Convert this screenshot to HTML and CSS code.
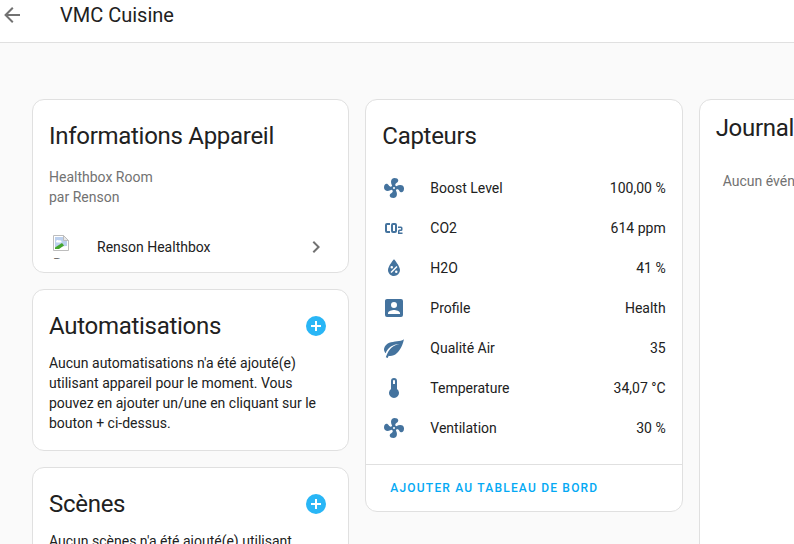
FILE: index.html
```html
<!DOCTYPE html>
<html lang="fr">
<head>
    <meta charset="UTF-8">
    <meta name="viewport" content="width=device-width, initial-scale=1.0">
    <title>VMC Cuisine</title>
    <link rel="stylesheet" href="styles.css">
</head>
<body>
    <header class="toolbar">
        <svg class="back-icon" viewBox="0 0 24 24"><path d="M20,11V13H8L13.5,18.5L12.08,19.92L4.16,12L12.08,4.08L13.5,5.5L8,11H20Z"/></svg>
        <div class="toolbar-title">VMC Cuisine</div>
    </header>

    <main class="columns">
        <div class="column">
            <section class="card">
                <h2 class="card-title">Informations Appareil</h2>
                <div class="device-info">
                    <div>Healthbox Room</div>
                    <div>par Renson</div>
                </div>
                <div class="integration">
                    <div class="broken-img">
                        <svg viewBox="0 0 16 16">
                            <path fill="#fff" stroke="#bdbdbd" d="M.5.5H10.5L15.5 5.5V15.5H.5Z"/>
                            <path fill="#bcd0ee" d="M2 2H10L14 6V11L2 12Z"/>
                            <path fill="#fff" d="M3 6.5C3 5 5 4.5 6 5.5C7.5 5 9 6 8.5 7.5H3.5Z"/>
                            <path fill="#43a52e" d="M2 14V12.5L9 8L11 10.5L6 14Z"/>
                            <path fill="#fff" d="M10 14L13 11L14 12V14Z"/>
                            <path fill="#e8e8e8" stroke="#bdbdbd" d="M10.5 .5V5.5H15.5Z"/>
                        </svg>
                        <span class="broken-alt">Renson</span>
                    </div>
                    <span class="integration-name">Renson Healthbox</span>
                    <svg class="chevron" viewBox="0 0 24 24"><path d="M8.59,16.58L13.17,12L8.59,7.41L10,6L16,12L10,18L8.59,16.58Z"/></svg>
                </div>
            </section>

            <section class="card">
                <div class="title-row">
                    <h2 class="card-title">Automatisations</h2>
                    <svg class="add-icon" viewBox="0 0 24 24"><path d="M17,13H13V17H11V13H7V11H11V7H13V11H17M12,2A10,10 0 0,0 2,12A10,10 0 0,0 12,22A10,10 0 0,0 22,12A10,10 0 0,0 12,2Z"/></svg>
                </div>
                <p class="card-text">Aucun automatisations n'a été ajouté(e) utilisant appareil pour le moment. Vous pouvez en ajouter un/une en cliquant sur le bouton + ci-dessus.</p>
            </section>

            <section class="card">
                <div class="title-row">
                    <h2 class="card-title">Scènes</h2>
                    <svg class="add-icon" viewBox="0 0 24 24"><path d="M17,13H13V17H11V13H7V11H11V7H13V11H17M12,2A10,10 0 0,0 2,12A10,10 0 0,0 12,22A10,10 0 0,0 22,12A10,10 0 0,0 12,2Z"/></svg>
                </div>
                <p class="card-text">Aucun scènes n'a été ajouté(e) utilisant appareil pour le moment. Vous pouvez en ajouter un/une en cliquant sur le bouton + ci-dessus.</p>
            </section>
        </div>

        <div class="column">
            <section class="card">
                <h2 class="card-title">Capteurs</h2>
                <div class="sensors">
                    <div class="sensor">
                        <svg class="sensor-icon" viewBox="0 0 24 24"><path d="M12,11A1,1 0 0,0 11,12A1,1 0 0,0 12,13A1,1 0 0,0 13,12A1,1 0 0,0 12,11M12.5,2C17,2 17.11,5.57 14.75,6.75C13.76,7.24 13.32,8.29 13.13,9.22C13.61,9.42 14.03,9.73 14.35,10.13C18.05,8.13 22.03,8.92 22.03,12.5C22.03,17 18.46,17.1 17.28,14.73C16.78,13.74 15.72,13.3 14.79,13.11C14.59,13.59 14.28,14 13.88,14.34C15.87,18.03 15.08,22 11.5,22C7,22 6.91,18.42 9.27,17.24C10.25,16.75 10.69,15.71 10.89,14.79C10.4,14.59 9.97,14.27 9.65,13.87C5.96,15.85 2,15.07 2,11.5C2,7 5.56,6.89 6.74,9.26C7.24,10.25 8.29,10.68 9.22,10.87C9.41,10.39 9.73,9.97 10.14,9.65C8.15,5.96 8.94,2 12.5,2Z"/></svg>
                        <span class="sensor-name">Boost Level</span>
                        <span>100,00 %</span>
                    </div>
                    <div class="sensor">
                        <svg class="sensor-icon" viewBox="0 0 24 24"><path d="M5,7A2,2 0 0,0 3,9V15A2,2 0 0,0 5,17H8V15H5V9H8V7H5M11,7A2,2 0 0,0 9,9V15A2,2 0 0,0 11,17H13A2,2 0 0,0 15,15V9A2,2 0 0,0 13,7H11M11,9H13V15H11V9M16,10.5V12H19V13.5H17.5A1.5,1.5 0 0,0 16,15V18H20.5V16.5H17.5V15H19A1.5,1.5 0 0,0 20.5,13.5V12A1.5,1.5 0 0,0 19,10.5H16Z"/></svg>
                        <span class="sensor-name">CO2</span>
                        <span>614 ppm</span>
                    </div>
                    <div class="sensor">
                        <svg class="sensor-icon" viewBox="0 0 24 24"><path d="M12,3.25C12,3.25 6,10 6,14C6,17.32 8.69,20 12,20A6,6 0 0,0 18,14C18,10 12,3.25 12,3.25M14.47,9.97L15.53,11.03L9.53,17.03L8.47,15.97M9.75,10A1.25,1.25 0 0,1 11,11.25A1.25,1.25 0 0,1 9.75,12.5A1.25,1.25 0 0,1 8.5,11.25A1.25,1.25 0 0,1 9.75,10M14.25,14.5A1.25,1.25 0 0,1 15.5,15.75A1.25,1.25 0 0,1 14.25,17A1.25,1.25 0 0,1 13,15.75A1.25,1.25 0 0,1 14.25,14.5Z"/></svg>
                        <span class="sensor-name">H2O</span>
                        <span>41 %</span>
                    </div>
                    <div class="sensor">
                        <svg class="sensor-icon" viewBox="0 0 24 24"><path d="M6,17C6,15 10,13.9 12,13.9C14,13.9 18,15 18,17V18H6M15,9A3,3 0 0,1 12,12A3,3 0 0,1 9,9A3,3 0 0,1 12,6A3,3 0 0,1 15,9M3,5V19A2,2 0 0,0 5,21H19A2,2 0 0,0 21,19V5A2,2 0 0,0 19,3H5C3.89,3 3,3.9 3,5Z"/></svg>
                        <span class="sensor-name">Profile</span>
                        <span>Health</span>
                    </div>
                    <div class="sensor">
                        <svg class="sensor-icon" viewBox="0 0 24 24"><path d="M17,8C8,10 5.9,16.17 3.82,21.34L5.71,22L6.66,19.7C7.14,19.87 7.64,20 8,20C19,20 22,3 22,3C21,5 14,5.25 9,6.25C4,7.25 2,11.5 2,13.5C2,15.5 3.75,17.25 3.75,17.25C7,8 17,8 17,8Z"/></svg>
                        <span class="sensor-name">Qualité Air</span>
                        <span>35</span>
                    </div>
                    <div class="sensor">
                        <svg class="sensor-icon" viewBox="0 0 24 24"><path d="M15 13V5A3 3 0 0 0 9 5V13A5 5 0 1 0 15 13M12 4A1 1 0 0 1 13 5V8H11V5A1 1 0 0 1 12 4Z"/></svg>
                        <span class="sensor-name">Temperature</span>
                        <span>34,07 °C</span>
                    </div>
                    <div class="sensor">
                        <svg class="sensor-icon" viewBox="0 0 24 24"><path d="M12,11A1,1 0 0,0 11,12A1,1 0 0,0 12,13A1,1 0 0,0 13,12A1,1 0 0,0 12,11M12.5,2C17,2 17.11,5.57 14.75,6.75C13.76,7.24 13.32,8.29 13.13,9.22C13.61,9.42 14.03,9.73 14.35,10.13C18.05,8.13 22.03,8.92 22.03,12.5C22.03,17 18.46,17.1 17.28,14.73C16.78,13.74 15.72,13.3 14.79,13.11C14.59,13.59 14.28,14 13.88,14.34C15.87,18.03 15.08,22 11.5,22C7,22 6.91,18.42 9.27,17.24C10.25,16.75 10.69,15.71 10.89,14.79C10.4,14.59 9.97,14.27 9.65,13.87C5.96,15.85 2,15.07 2,11.5C2,7 5.56,6.89 6.74,9.26C7.24,10.25 8.29,10.68 9.22,10.87C9.41,10.39 9.73,9.97 10.14,9.65C8.15,5.96 8.94,2 12.5,2Z"/></svg>
                        <span class="sensor-name">Ventilation</span>
                        <span>30 %</span>
                    </div>
                </div>
                <div class="card-actions">
                    <span class="action-link">AJOUTER AU TABLEAU DE BORD</span>
                </div>
            </section>
        </div>

        <div class="column">
            <section class="card card-tall">
                <h2 class="card-title logbook-title">Journal</h2>
                <div class="logbook-empty">Aucun événement</div>
            </section>
        </div>
    </main>
</body>
</html>
```

FILE: styles.css
```css
html, body {
    height: 100%;
}
body {
    font-family: Roboto, sans-serif;
    font-size: 14px;
    line-height: 20px;
    color: #212121;
    background-color: #fafafa;
    margin: 0;
    overflow: hidden;
}
.toolbar {
    display: flex;
    align-items: center;
    height: 30px;
    padding-bottom: 12px;
    background-color: white;
    border-bottom: 1px solid #e0e0e0;
}
.back-icon {
    width: 24px;
    height: 24px;
    fill: #727272;
    flex: none;
}
.toolbar-title {
    font-size: 20px;
    margin-left: 36px;
}
.columns {
    display: grid;
    grid-template-columns: repeat(3, 317.33px);
    gap: 16px;
    padding: 56px 0 0 32px;
}
.column {
    display: flex;
    flex-direction: column;
    gap: 16px;
    min-width: 0;
}
.card {
    background-color: white;
    border: 1px solid #e0e0e0;
    border-radius: 12px;
}
.card-tall {
    height: 600px;
}
.card-title {
    font-size: 24px;
    font-weight: 400;
    line-height: 32px;
    letter-spacing: -0.012em;
    margin: 0;
    padding: 20px 16px 0;
}
.logbook-title {
    padding-top: 12px;
}
.title-row {
    display: flex;
    justify-content: space-between;
    align-items: flex-start;
}
.add-icon {
    width: 24px;
    height: 24px;
    fill: #29b6f6;
    margin: 24px 20px 0 0;
    flex: none;
}
.card-text {
    margin: 0;
    padding: 11px 16px 17px;
}
.device-info {
    color: #727272;
    padding: 15px 16px 0;
}
.integration {
    display: flex;
    align-items: center;
    height: 40px;
    padding: 20px 20px 0 20px;
    margin-bottom: 5px;
}
.broken-img {
    width: 16px;
    height: 24px;
    overflow: hidden;
    flex: none;
    margin-right: 28px;
}
.broken-img svg {
    display: block;
    width: 16px;
    height: 16px;
}
.broken-alt {
    display: block;
    color: #727272;
    margin-top: 3px;
}
.integration-name {
    flex: 1;
}
.chevron {
    width: 24px;
    height: 24px;
    fill: #727272;
}
.sensors {
    padding: 16px 16px 16px;
}
.sensor {
    display: flex;
    align-items: center;
    height: 40px;
}
.sensor-icon {
    width: 24px;
    height: 24px;
    fill: #44739e;
    margin-right: 24px;
    flex: none;
}
.sensor-name {
    flex: 1;
}
.card-actions {
    border-top: 1px solid #e0e0e0;
    padding: 12px 24px 13px;
}
.action-link {
    color: #03a9f4;
    font-size: 12px;
    font-weight: 500;
    letter-spacing: 1.2px;
}
.logbook-empty {
    color: #727272;
    padding: 27px 23px 0;
}
```
